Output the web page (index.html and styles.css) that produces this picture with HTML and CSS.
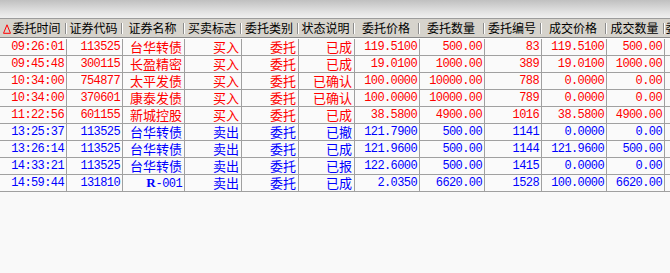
FILE: index.html
```html
<!DOCTYPE html>
<html lang="zh-CN">
<head>
<meta charset="utf-8">
<title>委托查询</title>
<link rel="stylesheet" href="styles.css">
</head>
<body>
<div class="view">
  <div class="topbar"></div>
  <div class="grid head">
    <div class="h"><svg class="sort" width="8" height="10" viewBox="0 0 8 10"><polygon points="4,0.8 7.5,9.3 0.5,9.3" fill="none" stroke="#ff0000" stroke-width="1"/></svg>委托时间</div>
    <div class="h">证券代码</div>
    <div class="h">证券名称</div>
    <div class="h">买卖标志</div>
    <div class="h">委托类别</div>
    <div class="h">状态说明</div>
    <div class="h">委托价格</div>
    <div class="h">委托数量</div>
    <div class="h">委托编号</div>
    <div class="h">成交价格</div>
    <div class="h">成交数量</div>
    <div class="h">委托方式</div>
  </div>
  <div class="body">
    <div class="grid row buy"><div class="n">09:26:01</div><div class="n">113525</div><div class="c">台华转债</div><div class="c">买入</div><div class="c">委托</div><div class="c">已成</div><div class="n">119.5100</div><div class="n">500.00</div><div class="n">83</div><div class="n">119.5100</div><div class="n">500.00</div><div></div></div>
    <div class="grid row buy"><div class="n">09:45:48</div><div class="n">300115</div><div class="c">长盈精密</div><div class="c">买入</div><div class="c">委托</div><div class="c">已成</div><div class="n">19.0100</div><div class="n">1000.00</div><div class="n">389</div><div class="n">19.0100</div><div class="n">1000.00</div><div></div></div>
    <div class="grid row buy"><div class="n">10:34:00</div><div class="n">754877</div><div class="c">太平发债</div><div class="c">买入</div><div class="c">委托</div><div class="c">已确认</div><div class="n">100.0000</div><div class="n">10000.00</div><div class="n">788</div><div class="n">0.0000</div><div class="n">0.00</div><div></div></div>
    <div class="grid row buy"><div class="n">10:34:00</div><div class="n">370601</div><div class="c">康泰发债</div><div class="c">买入</div><div class="c">委托</div><div class="c">已确认</div><div class="n">100.0000</div><div class="n">10000.00</div><div class="n">789</div><div class="n">0.0000</div><div class="n">0.00</div><div></div></div>
    <div class="grid row buy"><div class="n">11:22:56</div><div class="n">601155</div><div class="c">新城控股</div><div class="c">买入</div><div class="c">委托</div><div class="c">已成</div><div class="n">38.5800</div><div class="n">4900.00</div><div class="n">1016</div><div class="n">38.5800</div><div class="n">4900.00</div><div></div></div>
    <div class="grid row sell"><div class="n">13:25:37</div><div class="n">113525</div><div class="c">台华转债</div><div class="c">卖出</div><div class="c">委托</div><div class="c">已撤</div><div class="n">121.7900</div><div class="n">500.00</div><div class="n">1141</div><div class="n">0.0000</div><div class="n">0.00</div><div></div></div>
    <div class="grid row sell"><div class="n">13:26:14</div><div class="n">113525</div><div class="c">台华转债</div><div class="c">卖出</div><div class="c">委托</div><div class="c">已成</div><div class="n">121.9600</div><div class="n">500.00</div><div class="n">1144</div><div class="n">121.9600</div><div class="n">500.00</div><div></div></div>
    <div class="grid row sell"><div class="n">14:33:21</div><div class="n">113525</div><div class="c">台华转债</div><div class="c">卖出</div><div class="c">委托</div><div class="c">已报</div><div class="n">122.6000</div><div class="n">500.00</div><div class="n">1415</div><div class="n">0.0000</div><div class="n">0.00</div><div></div></div>
    <div class="grid row sell"><div class="n">14:59:44</div><div class="n">131810</div><div class="n"><b class="r">R</b>-001</div><div class="c">卖出</div><div class="c">委托</div><div class="c">已成</div><div class="n">2.0350</div><div class="n">6620.00</div><div class="n">1528</div><div class="n">100.0000</div><div class="n">6620.00</div><div></div></div>
  </div>
</div>
</body>
</html>
```
FILE: styles.css
```css
html, body {
  margin: 0;
  padding: 0;
  background: #f9f9f9;
  overflow: hidden;
}
.view {
  width: 670px;
  height: 273px;
  overflow: hidden;
  background: #f9f9f9;
}
.topbar {
  width: 717px;
  height: 18px;
  background: linear-gradient(#c0c0c0, #e4e4e4 70%, #f0f0f0);
  border-bottom: 1px solid #9c9c9c;
}
.grid {
  display: grid;
  grid-template-columns: 67px 56px 62px 57px 57px 56px 65px 65px 57px 65px 58px 52px;
  width: 717px;
}
.head {
  height: 18px;
  background: #d6d3cc;
  border-bottom: 1px solid #8a8a8a;
}
.h {
  position: relative;
  box-sizing: border-box;
  height: 18px;
  line-height: 18px;
  text-align: center;
  font-family: "Noto Sans CJK SC", sans-serif;
  font-size: 12px;
  color: #000;
  white-space: nowrap;
  overflow: hidden;
  padding-right: 3px;
}
.h::after {
  content: "";
  position: absolute;
  right: 1px;
  top: 4px;
  width: 1px;
  height: 11px;
  background: #8c8c8c;
  box-shadow: 1px 0 0 #ffffff;
}
.sort {
  display: inline-block;
  vertical-align: -1px;
  margin-right: 1px;
}
.body {
  border-top: 1px solid #ffffff;
}
.row > div {
  box-sizing: border-box;
  height: 17px;
  border-right: 1px solid #a0a0a0;
  border-bottom: 1px solid #a0a0a0;
  background: #fafafa;
  text-align: right;
  padding-right: 2px;
  white-space: nowrap;
  overflow: hidden;
  line-height: 16px;
}
.row .n {
  font-family: "Liberation Mono", monospace;
  font-size: 12px;
  letter-spacing: -0.6px;
}
.row .c {
  font-family: "Noto Sans CJK SC", sans-serif;
  font-size: 13px;
  line-height: 16px;
}
.r {
  font-family: "Liberation Serif", serif;
  font-weight: bold;
  font-size: 13px;
  letter-spacing: 0;
}
.buy { color: #ff0000; }
.sell { color: #0000ff; }
```
